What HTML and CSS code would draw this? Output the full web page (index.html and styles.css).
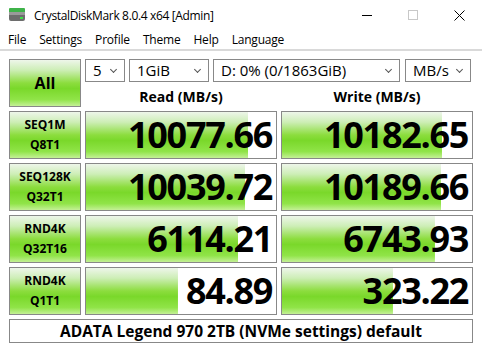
FILE: index.html
```html
<!DOCTYPE html>
<html lang="en">
<head>
  <meta charset="UTF-8">
  <title>CrystalDiskMark 8.0.4 x64 [Admin]</title>
  <link rel="stylesheet" href="styles.css">
</head>
<body>

<div class="window">
  <div class="titlebar">
    <svg class="app-icon" width="18" height="16" viewBox="0 0 18 16">
      <rect x="1" y="1" width="16" height="6" rx="1" fill="#3fb34a"/>
      <rect x="1" y="5" width="16" height="9" rx="2" fill="#6d6d6d"/>
      <rect x="1" y="5" width="16" height="3" fill="#9a9a9a"/>
      <rect x="12" y="10" width="3" height="2" fill="#3fe04a"/>
    </svg>
    <span class="title">CrystalDiskMark 8.0.4 x64 [Admin]</span>
    <div class="controls">
      <span class="ctl"><svg width="10" height="10" viewBox="0 0 10 10"><line x1="0" y1="5.5" x2="10" y2="5.5" stroke="#000" stroke-width="1"/></svg></span>
      <span class="ctl"><svg width="10" height="10" viewBox="0 0 10 10"><rect x="0.5" y="0.5" width="9" height="9" fill="none" stroke="#c8c8c8"/></svg></span>
      <span class="ctl"><svg width="11" height="11" viewBox="0 0 11 11"><path d="M0.5 0.5L10.5 10.5M10.5 0.5L0.5 10.5" stroke="#000" stroke-width="1"/></svg></span>
    </div>
  </div>

  <div class="menubar">
    <span>File</span>
    <span>Settings</span>
    <span>Profile</span>
    <span>Theme</span>
    <span>Help</span>
    <span>Language</span>
  </div>

  <div class="board">
    <div class="btn all">All</div>
    <div class="top">
      <div class="selects">
        <div class="select s-count">5</div>
        <div class="select s-size">1GiB</div>
        <div class="select s-drive">D: 0% (0/1863GiB)</div>
        <div class="select s-unit">MB/s</div>
      </div>
      <div class="heads">
        <div class="head">Read (MB/s)</div>
        <div class="head">Write (MB/s)</div>
      </div>
    </div>

    <div class="btn label">SEQ1M<br>Q8T1</div>
    <div class="meter" style="background-size: 85.3% 100%">10077.66</div>
    <div class="meter" style="background-size: 84.2% 100%">10182.65</div>

    <div class="btn label">SEQ128K<br>Q32T1</div>
    <div class="meter" style="background-size: 83.7% 100%">10039.72</div>
    <div class="meter" style="background-size: 83.7% 100%">10189.66</div>

    <div class="btn label">RND4K<br>Q32T16</div>
    <div class="meter" style="background-size: 80% 100%">6114.21</div>
    <div class="meter" style="background-size: 80.5% 100%">6743.93</div>

    <div class="btn label">RND4K<br>Q1T1</div>
    <div class="meter" style="background-size: 48.4% 100%">84.89</div>
    <div class="meter" style="background-size: 58.4% 100%">323.22</div>

    <div class="comment">ADATA Legend 970 2TB (NVMe settings) default</div>
  </div>
</div>

</body>
</html>
```

FILE: styles.css
```css
body {
  margin: 0;
  background: #fff;
  font-family: 'Open Sans', 'Noto Sans', sans-serif;
  color: #000;
}
.window {
  width: 482px;
  height: 352px;
  overflow: hidden;
}
.titlebar {
  height: 30px;
  display: flex;
  align-items: center;
  padding-left: 8px;
}
.app-icon {
  margin-right: 8px;
}
.title {
  font-size: 12px;
  letter-spacing: -0.35px;
  flex: 1;
}
.controls {
  display: flex;
  height: 30px;
}
.ctl {
  width: 46px;
  display: flex;
  align-items: center;
  justify-content: center;
}
.menubar {
  height: 19px;
  display: flex;
  align-items: center;
  font-size: 12px;
  letter-spacing: -0.2px;
  padding-left: 8px;
  gap: 13px;
  border-bottom: 2px solid #d9d9d9;
}
.board {
  display: grid;
  grid-template-columns: 72px 192px 192px;
  grid-template-rows: 48px 48px 48px 48px 48px 24px;
  gap: 4px;
  padding: 8px 0 0 9px;
}
.btn {
  box-sizing: border-box;
  border: 1px solid #888;
  background: linear-gradient(to bottom, #eef6ea 0%, #cdeeb6 22%, #8cdd3e 50%, #7ad82a 62%, #90e448 86%, #c4f096 100%);
  display: flex;
  align-items: center;
  justify-content: center;
  text-align: center;
  font-weight: bold;
}
.all {
  font-size: 16px;
}
.label {
  font-size: 12px;
  line-height: 20px;
}
.top {
  grid-column: 2 / 4;
  display: flex;
  flex-direction: column;
}
.selects {
  display: flex;
  gap: 4px;
  height: 23px;
}
.select {
  box-sizing: border-box;
  border: 1px solid #888;
  height: 23px;
  font-size: 15px;
  line-height: 21px;
  padding-left: 7px;
  position: relative;
  color: #000;
}
.select::after {
  content: "";
  position: absolute;
  right: 8px;
  top: 7px;
  width: 4px;
  height: 4px;
  border-right: 1px solid #555;
  border-bottom: 1px solid #555;
  transform: rotate(45deg);
}
.s-count { width: 40px; }
.s-size { width: 80px; }
.s-drive { width: 187px; }
.s-unit { width: 66px; margin-left: 1px; }
.heads {
  display: flex;
  gap: 4px;
  flex: 1;
}
.head {
  width: 192px;
  text-align: center;
  font-size: 14px;
  font-weight: bold;
  line-height: 26px;
  padding-top: 2px;
}
.meter {
  box-sizing: border-box;
  border: 1px solid #888;
  background-color: #fff;
  background-image: linear-gradient(to bottom, #eef6ea 0%, #cdeeb6 22%, #8cdd3e 50%, #7ad82a 62%, #90e448 86%, #c4f096 100%);
  background-repeat: no-repeat;
  text-align: right;
  font-size: 36px;
  font-weight: bold;
  line-height: 46px;
  padding-right: 4px;
  letter-spacing: -1.3px;
}
.comment {
  grid-column: 1 / 4;
  box-sizing: border-box;
  border: 1px solid #888;
  text-align: center;
  font-size: 15.5px;
  font-weight: bold;
  line-height: 22px;
}
```
